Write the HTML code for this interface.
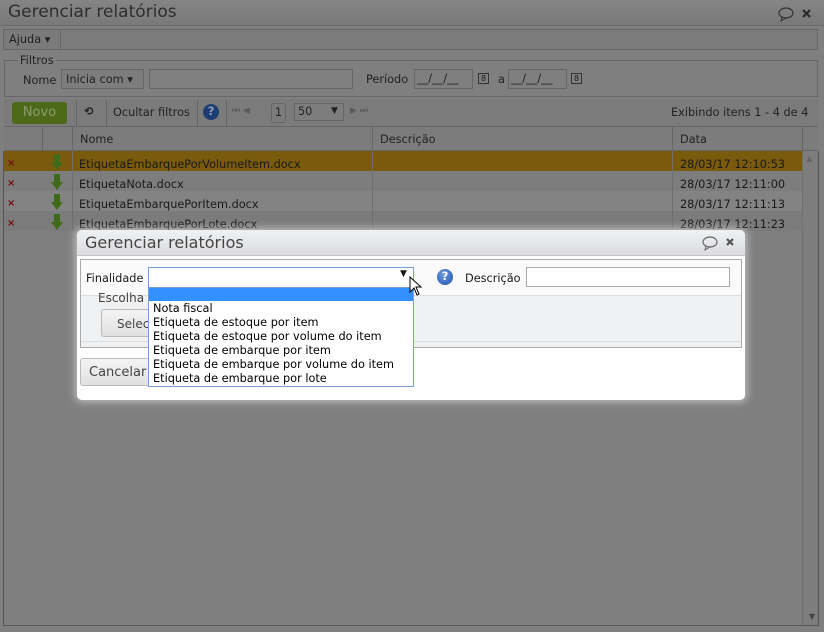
<!DOCTYPE html>
<html><head><meta charset="utf-8"><style>
*{box-sizing:border-box;margin:0;padding:0}
body{width:824px;height:632px;overflow:hidden;background:#7f7f7f;font-family:"DejaVu Sans","Liberation Sans",sans-serif;font-size:11.3px;color:#1a1a1a;position:relative}
.a{position:absolute}
.t{white-space:nowrap}
</style></head><body>
<div class="a" style="left:0;top:0;width:824px;height:26px;background:linear-gradient(#858585,#797979);border-bottom:1px solid #6a6a6a"></div>
<div class="a t" style="left:8px;top:2px;font-size:17px;color:#2e2e2e">Gerenciar relatórios</div>
<svg class="a" style="left:778px;top:6px" width="40" height="16"><ellipse cx="8" cy="7" rx="7" ry="5" fill="none" stroke="#333" stroke-width="1.2"/><path d="M4 11 L3 15 L8 12" fill="none" stroke="#333"/><path d="M25 4 L32 11 M32 4 L25 11" stroke="#2a2a2a" stroke-width="2.2"/></svg>
<div class="a" style="left:3px;top:29px;width:815px;height:21px;border:1px solid #666;background:#7b7b7b"></div>
<div class="a" style="left:3px;top:29px;width:58px;height:21px;border-right:1px solid #666"></div>
<div class="a t" style="left:9px;top:33px;color:#222">Ajuda ▾</div>
<div class="a" style="left:4px;top:60px;width:814px;height:37px;border:1px solid #666"></div>
<div class="a t" style="left:18px;top:54px;background:#7f7f7f;padding:0 2px;color:#222">Filtros</div>
<div class="a t" style="left:23px;top:74px;color:#222">Nome</div>
<div class="a" style="left:61px;top:69px;width:83px;height:20px;border:1px solid #666;background:#7d7d7d"></div>
<div class="a t" style="left:66px;top:73px;color:#222">Inicia com ▾</div>
<div class="a" style="left:149px;top:69px;width:204px;height:20px;border:1px solid #666;background:#808080"></div>
<div class="a t" style="left:366px;top:73px;color:#222">Período</div>
<div class="a" style="left:414px;top:69px;width:59px;height:20px;border:1px solid #666"></div>
<div class="a t" style="left:417px;top:72px;color:#222">__/__/__</div>
<div class="a" style="left:478px;top:73px;width:11px;height:11px;border:1px solid #333;font-size:8px;text-align:center;line-height:9px">8</div>
<div class="a t" style="left:498px;top:73px;color:#222">a</div>
<div class="a" style="left:508px;top:69px;width:59px;height:20px;border:1px solid #666"></div>
<div class="a t" style="left:511px;top:72px;color:#222">__/__/__</div>
<div class="a" style="left:571px;top:73px;width:11px;height:11px;border:1px solid #333;font-size:8px;text-align:center;line-height:9px">8</div>
<div class="a" style="left:4px;top:99px;width:814px;height:28px;background:#7b7b7b;border-bottom:1px solid #666"></div>
<div class="a t" style="left:12px;top:102px;width:55px;height:22px;background:#4d6a1a;border-radius:3px;color:#8b9a6d;font-size:13px;text-align:center;line-height:22px">Novo</div>
<div class="a" style="left:76px;top:100px;width:1px;height:26px;background:#666"></div>
<div class="a t" style="left:84px;top:105px;color:#222;font-weight:bold">⟲</div>
<div class="a" style="left:106px;top:100px;width:1px;height:26px;background:#666"></div>
<div class="a t" style="left:113px;top:106px;color:#222">Ocultar filtros</div>
<div class="a" style="left:197px;top:100px;width:1px;height:26px;background:#666"></div>
<div class="a" style="left:203px;top:104px;width:16px;height:16px;border-radius:50%;background:#1e3e72;color:#8fa0bd;font-weight:bold;text-align:center;line-height:16px">?</div>
<div class="a" style="left:226px;top:100px;width:1px;height:26px;background:#666"></div>
<div class="a t" style="left:232px;top:106px;color:#5a5a5a;font-size:9px">⏮ ◀</div>
<div class="a" style="left:271px;top:103px;width:15px;height:20px;border:1px solid #666;border-radius:3px;text-align:center;line-height:18px;color:#222">1</div>
<div class="a" style="left:294px;top:103px;width:50px;height:18px;border:1px solid #666;background:#7d7d7d"></div>
<div class="a t" style="left:298px;top:105px;color:#222">50</div>
<div class="a t" style="left:331px;top:106px;color:#222;font-size:9px">▼</div>
<div class="a t" style="left:350px;top:106px;color:#5a5a5a;font-size:9px">▶ ⏭</div>
<div class="a t" style="left:671px;top:106px;color:#222">Exibindo itens 1 - 4 de 4</div>
<div class="a" style="left:4px;top:127px;width:814px;height:24px;background:#7c7c7c;border-bottom:1px solid #666"></div>
<div class="a" style="left:42px;top:127px;width:1px;height:24px;background:#666"></div>
<div class="a" style="left:72px;top:127px;width:1px;height:24px;background:#666"></div>
<div class="a" style="left:372px;top:127px;width:1px;height:24px;background:#666"></div>
<div class="a" style="left:672px;top:127px;width:1px;height:24px;background:#666"></div>
<div class="a" style="left:802px;top:127px;width:1px;height:24px;background:#666"></div>
<div class="a t" style="left:80px;top:133px;color:#222">Nome</div>
<div class="a t" style="left:380px;top:133px;color:#222">Descrição</div>
<div class="a t" style="left:680px;top:133px;color:#222">Data</div>
<div class="a" style="left:4px;top:151px;width:798px;height:20px;background:#7a5a0c"></div>
<div class="a" style="left:4px;top:171px;width:798px;height:20px;background:#7d7d7d"></div>
<div class="a" style="left:4px;top:191px;width:798px;height:20px;background:#838383"></div>
<div class="a" style="left:4px;top:211px;width:798px;height:20px;background:#7b7b7b"></div>
<div class="a" style="left:72px;top:151px;width:1px;height:80px;background:#6e6e6e"></div>
<div class="a" style="left:372px;top:151px;width:1px;height:80px;background:#6e6e6e"></div>
<div class="a" style="left:672px;top:151px;width:1px;height:80px;background:#6e6e6e"></div>
<div class="a" style="left:802px;top:151px;width:16px;height:475px;background:#7d7d7d;border-left:1px solid #707070"></div>
<div class="a t" style="left:806px;top:154px;color:#666;font-size:8px">▲</div>
<div class="a t" style="left:809px;top:612px;color:#444;font-size:8px">▼</div>
<div class="a" style="left:4px;top:625px;width:814px;height:1px;background:#555"></div>
<div class="a" style="left:3px;top:151px;width:1px;height:475px;background:#555"></div>
<div class="a" style="left:818px;top:151px;width:1px;height:475px;background:#555"></div>
<div class="a t" style="left:7px;top:155px;color:#6e1010;font-size:10px;line-height:20px;font-weight:bold"><div style="position:absolute;top:-1px">×</div><div style="position:absolute;top:19px">×</div><div style="position:absolute;top:39px">×</div><div style="position:absolute;top:59px">×</div></div>
<svg class="a" style="left:50px;top:152px" width="14" height="80"><g fill="#3f6a1a"><path d="M4 2h6v8h3l-6 8-6-8h3z"/><path d="M4 22h6v8h3l-6 8-6-8h3z"/><path d="M4 42h6v8h3l-6 8-6-8h3z"/><path d="M4 62h6v8h3l-6 8-6-8h3z"/></g></svg>
<div class="a t" style="left:79px;top:155px;color:#1a1a1a;line-height:20px">EtiquetaEmbarquePorVolumeItem.docx<br>EtiquetaNota.docx<br>EtiquetaEmbarquePorItem.docx<br>EtiquetaEmbarquePorLote.docx</div>
<div class="a t" style="left:680px;top:155px;color:#1a1a1a;line-height:20px">28/03/17 12:10:53<br>28/03/17 12:11:00<br>28/03/17 12:11:13<br>28/03/17 12:11:23</div>
<div class="a" style="left:77px;top:230px;width:668px;height:170px;background:#fff;border-radius:5px;box-shadow:0 0 8px 2px rgba(255,255,255,.5)"></div>
<div class="a" style="left:77px;top:230px;width:668px;height:26px;background:linear-gradient(#f0f1f2,#dcdde0);border-radius:5px 5px 0 0;border-bottom:1px solid #c4c4c4"></div>
<div class="a t" style="left:85px;top:233px;font-size:16px;color:#444">Gerenciar relatórios</div>
<svg class="a" style="left:701px;top:235px" width="40" height="16"><ellipse cx="9" cy="7" rx="7" ry="5" fill="none" stroke="#666" stroke-width="1.2"/><path d="M5 11 L4 15 L9 12" fill="none" stroke="#666"/><path d="M26 4 L32 10 M32 4 L26 10" stroke="#555" stroke-width="2.2"/></svg>
<div class="a" style="left:80px;top:259px;width:662px;height:89px;border:1px solid #aaa;background:#f0f1f2"></div>
<div class="a" style="left:81px;top:260px;width:660px;height:36px;background:#fafafa;border-bottom:1px solid #ddd"></div>
<div class="a" style="left:81px;top:341px;width:660px;height:1px;background:#ddd"></div>
<div class="a t" style="left:86px;top:272px">Finalidade</div>
<div class="a" style="left:148px;top:267px;width:266px;height:21px;border:1px solid #7a9fd8;background:#fff"></div>
<div class="a t" style="left:400px;top:269px;font-size:9px">▼</div>
<div class="a" style="left:437px;top:269px;width:16px;height:16px;border-radius:50%;background:radial-gradient(circle at 40% 35%,#6d9ae0,#1c4fa8);color:#fff;font-weight:bold;text-align:center;line-height:16px">?</div>
<div class="a t" style="left:465px;top:272px">Descrição</div>
<div class="a" style="left:526px;top:267px;width:204px;height:20px;border:1px solid #aaa;background:#fff"></div>
<div class="a t" style="left:98px;top:291px;font-size:12px;color:#444">Escolha</div>
<div class="a" style="left:101px;top:309px;width:60px;height:28px;border:1px solid #bbb;border-radius:3px;background:linear-gradient(#f4f4f4,#e0e0e0)"></div>
<div class="a t" style="left:117px;top:317px;font-size:12px;color:#444">Selec</div>
<div class="a" style="left:80px;top:358px;width:70px;height:28px;border:1px solid #bbb;border-radius:3px;background:linear-gradient(#f4f4f4,#e0e0e0)"></div>
<div class="a t" style="left:89px;top:365px;font-size:13px;color:#444">Cancelar</div>
<div class="a" style="left:148px;top:287px;width:266px;height:100px;border:1px solid #7a9fd8;background:#fff"></div>
<div class="a" style="left:149px;top:288px;width:264px;height:13px;background:#3390ff"></div>
<div class="a t" style="left:153px;top:302px;line-height:14px;color:#000">Nota fiscal<br>Etiqueta de estoque por item<br>Etiqueta de estoque por volume do item<br>Etiqueta de embarque por item<br>Etiqueta de embarque por volume do item<br>Etiqueta de embarque por lote</div>
<svg class="a" style="left:409px;top:276px" width="14" height="22"><path d="M1 1 L1 16 L5 12 L8 19 L10 18 L7 11 L12 11 Z" fill="#fff" stroke="#000"/></svg>
</body></html>
